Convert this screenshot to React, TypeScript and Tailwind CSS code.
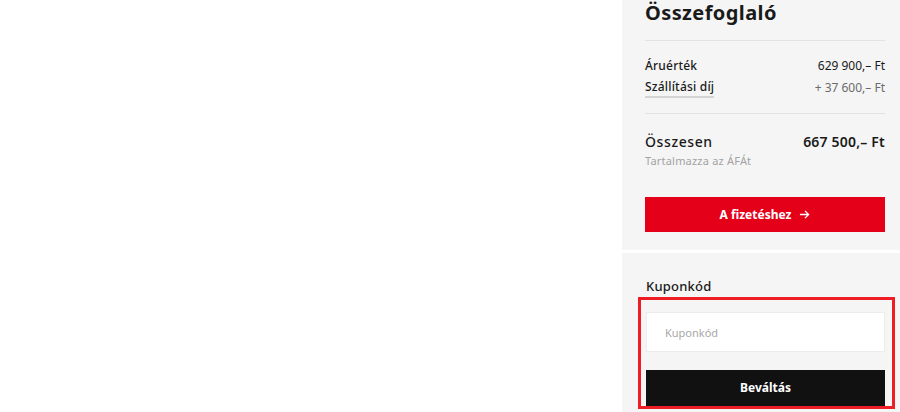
export default function App() {
  return (
    <div
      className="flex h-[412px] w-[900px] overflow-hidden bg-white text-[#1a1a1a]"
      style={{ fontFamily: '"Noto Sans", "Open Sans", Arial, sans-serif' }}
    >
      {/* bal oldali üres terület */}
      <div className="flex-1" />

      {/* összegző oszlop */}
      <div className="relative flex w-[278px] flex-col">
        <section className="bg-[#f5f5f5] pb-[18px] pl-[23px] pr-[15px]">
          <h2 className="h-[26px] text-[20px] font-bold leading-[26px] tracking-[0.4px]">
            Összefoglaló
          </h2>
          <div className="mt-[14px] border-t border-[#e3e3e3]" />

          <div className="mt-[16px] flex items-center justify-between text-[12px] leading-[18px]">
            <span className="font-medium tracking-[0.2px]">Áruérték</span>
            <span>629 900,– Ft</span>
          </div>
          <div className="mt-[3px] flex items-center justify-between text-[12px] leading-[18px]">
            <span className="border-b-2 border-[#d4d4d4] font-medium tracking-[0.2px]">
              Szállítási díj
            </span>
            <span className="text-[#6b6b6b]">+ 37 600,– Ft</span>
          </div>

          <div className="mt-[15px] border-t border-[#e3e3e3]" />

          <div className="mt-[18px] flex items-center justify-between text-[14px] leading-[20px]">
            <span className="font-medium tracking-[0.6px]">Összesen</span>
            <span className="font-semibold tracking-[0.2px]">667 500,– Ft</span>
          </div>
          <div className="mt-[1px] text-[11px] leading-[16px] tracking-[0.2px] text-[#a3a3a3]">
            Tartalmazza az ÁFÁt
          </div>

          <button className="mt-[28px] flex h-[35px] w-full items-center justify-center gap-2 bg-[#e5001a] text-[12px] font-bold text-white">
            A fizetéshez
            <svg
              width="11"
              height="11"
              viewBox="0 0 12 12"
              fill="none"
              stroke="currentColor"
              strokeWidth="1.4"
            >
              <path d="M1 6h9.5M6.5 2l4 4-4 4" />
            </svg>
          </button>
        </section>

        <section className="mt-[3px] flex-1 bg-[#f5f5f5] pl-[24px] pr-[15px] pt-[23px]">
          <div className="text-[13px] font-medium leading-[20px] tracking-[0.2px]">
            Kuponkód
          </div>
          <input
            placeholder="Kuponkód"
            className="mt-[16px] h-[40px] w-full border border-[#ececec] bg-white px-[18px] text-[11px] outline-none placeholder:text-[#a8a8a8]"
          />
          <button className="mt-[18px] flex h-[36px] w-full items-center justify-center bg-[#111111] text-[12px] font-bold text-white">
            Beváltás
          </button>
        </section>

        {/* kiemelő keret */}
        <div className="pointer-events-none absolute left-[16px] top-[297px] h-[112px] w-[257px] border-[3px] border-[#ee1d25]" />
      </div>
    </div>
  );
}
